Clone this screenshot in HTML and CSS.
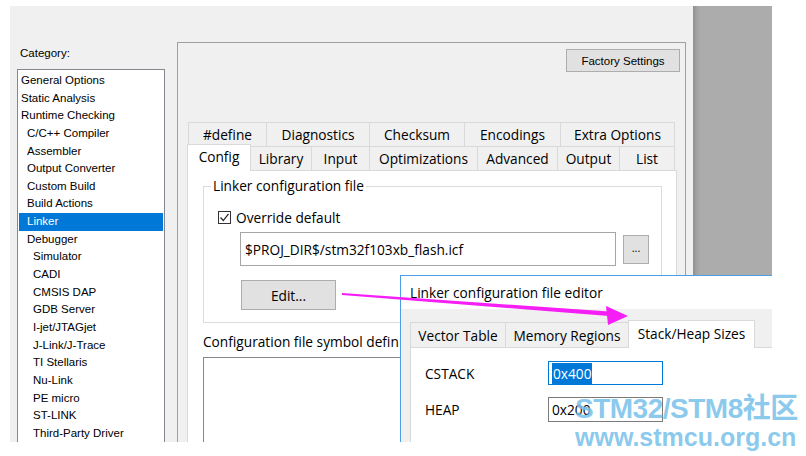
FILE: index.html
```html
<!DOCTYPE html>
<html>
<head>
<meta charset="utf-8">
<link rel="stylesheet" href="styles.css">
</head>
<body>
<div class="screen">
  <div class="window">
    <div class="cat-col">
      <div class="cat-label">Category:</div>
      <ul class="cat-list">
        <li class="l0">General Options</li>
        <li class="l0">Static Analysis</li>
        <li class="l0">Runtime Checking</li>
        <li class="l1">C/C++ Compiler</li>
        <li class="l1">Assembler</li>
        <li class="l1">Output Converter</li>
        <li class="l1">Custom Build</li>
        <li class="l1">Build Actions</li>
        <li class="l1 sel">Linker</li>
        <li class="l1">Debugger</li>
        <li class="l2">Simulator</li>
        <li class="l2">CADI</li>
        <li class="l2">CMSIS DAP</li>
        <li class="l2">GDB Server</li>
        <li class="l2">I-jet/JTAGjet</li>
        <li class="l2">J-Link/J-Trace</li>
        <li class="l2">TI Stellaris</li>
        <li class="l2">Nu-Link</li>
        <li class="l2">PE micro</li>
        <li class="l2">ST-LINK</li>
        <li class="l2">Third-Party Driver</li>
      </ul>
    </div>
    <div class="panel">
      <div class="panel-top"><div class="btn factory">Factory Settings</div></div>
      <div class="tabs">
        <div class="tab-row back">
          <div class="tab w78">#define</div>
          <div class="tab w103">Diagnostics</div>
          <div class="tab w95">Checksum</div>
          <div class="tab w96">Encodings</div>
          <div class="tab w114">Extra Options</div>
        </div>
        <div class="tab-row front">
          <div class="tab w63 active">Config</div>
          <div class="tab w61">Library</div>
          <div class="tab w58">Input</div>
          <div class="tab w108">Optimizations</div>
          <div class="tab w80">Advanced</div>
          <div class="tab w62">Output</div>
          <div class="tab w55">List</div>
        </div>
      </div>
      <div class="pane">
        <fieldset class="group">
          <legend>Linker configuration file</legend>
          <div class="check-row"><span class="box"><svg width="11" height="11" viewBox="0 0 11 11"><path d="M1.5 5.5 L4.3 8.5 L9.5 1.8" fill="none" stroke="#222" stroke-width="1.2"/></svg></span>Override default</div>
          <div class="path-row">
            <div class="field path">$PROJ_DIR$/stm32f103xb_flash.icf</div>
            <div class="btn dots">...</div>
          </div>
          <div class="btn edit">Edit...</div>
        </fieldset>
        <div class="sym-label">Configuration file symbol defin</div>
        <div class="sym-box"></div>
      </div>
    </div>
  </div>
  <div class="backdrop"></div>
</div>

<div class="dialog">
  <div class="dlg-title">Linker configuration file editor</div>
  <div class="dlg-body">
    <div class="dlg-tabs">
      <div class="dtab w95">Vector Table</div>
      <div class="dtab w123">Memory Regions</div>
      <div class="dtab w126 active">Stack/Heap Sizes</div>
    </div>
    <div class="dlg-pane">
      <div class="dlg-row"><span class="dlg-label">CSTACK</span><span class="field small focus"><span class="hl">0x400</span></span></div>
      <div class="dlg-row r2"><span class="dlg-label">HEAP</span><span class="field small dark">0x200</span></div>
    </div>
  </div>
</div>

<svg class="arrow" width="806" height="456" viewBox="0 0 806 456">
  <polygon points="342,293 609,311.5 609,316 342,295" fill="#f51ef5"/>
  <polygon points="606,306 628,316 608,325" fill="#f51ef5"/>
</svg>

<div class="watermark">
  <div class="wm1">STM32/STM8社区</div>
  <div class="wm2">www.stmcu.org.cn</div>
</div>
</body>
</html>
```
FILE: styles.css
```css
* { box-sizing: border-box; }
html, body { margin: 0; padding: 0; background: #fff; }
body {
  width: 806px; height: 456px; overflow: hidden; position: relative;
  font-family: "Liberation Sans", Arial, sans-serif; color: #000;
}
.screen { display: flex; padding: 6px 0 0 10px; height: 442px; }
.window { width: 683px; height: 436px; background: #f0f0f0; display: flex; overflow: hidden; }
.backdrop { width: 79px; background: linear-gradient(to right, #8e8e8e 0, #a4a4a4 4px, #acacac 8px); }

/* category column */
.cat-col { width: 167px; padding-left: 7px; display: flex; flex-direction: column; }
.cat-label { font-size: 11.5px; line-height: 16px; margin: 39px 0 0 3px; }
.cat-list {
  list-style: none; margin: 8px 0 0; padding: 2px 1px 0;
  background: #fff; border: 1px solid #828790; border-bottom: none;
  width: 148px; flex: 1;
}
.cat-list li { font-size: 11.5px; line-height: 17.65px; height: 17.65px; white-space: nowrap; }
.cat-list .l0 { padding-left: 2px; }
.cat-list .l1 { padding-left: 8px; }
.cat-list .l2 { padding-left: 14px; }
.cat-list .sel { background: #0078d7; color: #fff; }

/* right panel */
.panel {
  width: 509px; margin-top: 36px; border: 1px solid #a0a0a0; border-bottom: none;
  padding: 6px 5px 0 9px; display: flex; flex-direction: column;
}
.panel-top { display: flex; justify-content: flex-end; }
.btn {
  background: #e1e1e1; border: 1px solid #adadad; display: flex;
  align-items: center; justify-content: center;
}
.factory { width: 114px; height: 23px; font-size: 11.5px; }

.tabs { margin-top: 50px; font-family: "Open Sans", "Liberation Sans", sans-serif; font-size: 13.7px; }
.tab-row { display: flex; height: 24px; }
.tab-row.back { margin-left: 1px; }
.tab {
  height: 24px; border: 1px solid #d9d9d9; border-bottom: none; margin-right: -1px;
  display: flex; align-items: center; justify-content: center; background: #f0f0f0;
  white-space: nowrap;
}
.tab.active {
  background: #fff; height: 27px; margin-top: -2px; position: relative; z-index: 1;
  padding-bottom: 3px;
}
.w55 { width: 56px; } .w58 { width: 59px; } .w61 { width: 62px; } .w62 { width: 63px; }
.w63 { width: 64px; } .w78 { width: 79px; } .w80 { width: 81px; } .w95 { width: 96px; }
.w96 { width: 97px; } .w103 { width: 104px; } .w108 { width: 109px; } .w114 { width: 115px; }
.w123 { width: 124px; } .w126 { width: 127px; }

.pane {
  width: 490px; flex: 1; background: #fff; border: 1px solid #d9d9d9; border-bottom: none;
  padding: 7px 15px 0; font-family: "Open Sans", "Liberation Sans", sans-serif; font-size: 13.7px;
  display: flex; flex-direction: column;
}
.group { margin: 0; padding: 0 0 12px; border: 1px solid #dcdcdc; width: 459px; min-width: 0; }
.group legend { margin-left: 7px; padding: 0 2px; line-height: 16px; }
.check-row { display: flex; align-items: center; height: 16px; margin-top: 15px; padding-left: 14px; }
.box {
  width: 13px; height: 13px; border: 1px solid #333; background: #fff; margin-right: 5px;
  display: flex; align-items: center; justify-content: center;
}
.path-row { display: flex; align-items: center; margin-top: 7px; padding-left: 36px; }
.field { background: #fff; border: 1px solid #a6a6a6; display: flex; align-items: center; white-space: nowrap; }
.path { width: 376px; height: 34px; padding-left: 4px; }
.dots { width: 26px; height: 29px; margin-left: 7px; font-size: 11px; padding-bottom: 4px; }
.edit { width: 95px; height: 30px; margin: 14px 0 0 37px; }
.sym-label { margin-top: 11px; line-height: 16px; white-space: nowrap; }
.sym-box { margin-top: 7px; width: 459px; flex: 1; background: #fff; border: 1px solid #828790; border-bottom: none; }

/* overlay dialog */
.dialog {
  position: absolute; left: 400px; top: 275px; width: 372px; height: 167px;
  border-top: 1px solid #4a9fe6; border-left: 1px solid #4a9fe6; background: #f0f0f0;
  display: flex; flex-direction: column;
  font-family: "Open Sans", "Liberation Sans", sans-serif; font-size: 13.7px;
}
.dlg-title { background: #fff; height: 33px; line-height: 33px; padding-left: 9px; }
.dlg-body { flex: 1; padding: 13px 0 0 9px; display: flex; flex-direction: column; }
.dlg-tabs { display: flex; height: 25px; }
.dtab {
  height: 25px; border: 1px solid #d9d9d9; border-bottom: none; margin-right: -1px;
  display: flex; align-items: center; justify-content: center; white-space: nowrap;
}
.dtab.active { background: #fff; height: 28px; margin-top: -2px; padding-bottom: 3px; position: relative; z-index: 1; }
.dlg-pane { flex: 1; background: #fff; border-top: 1px solid #d9d9d9; border-left: 1px solid #d9d9d9; padding: 13px 0 0 14px; }
.dlg-row { display: flex; align-items: center; height: 24px; }
.dlg-row.r2 { margin-top: 12px; height: 25px; }
.dlg-label { width: 123px; }
.small { width: 115px; height: 100%; padding-left: 3px; }
.focus { border-color: #0078d7; }
.dark { border-color: #7a7a7a; }
.hl { background: #0078d7; color: #fff; padding: 1px 1px; }

.arrow { position: absolute; left: 0; top: 0; pointer-events: none; }

.watermark {
  position: absolute; left: 575px; top: 393px; color: rgba(118, 192, 234, 0.85);
  font-family: "Liberation Sans", "Noto Sans CJK SC", sans-serif; font-weight: bold;
  white-space: nowrap; pointer-events: none;
}
.wm1 { font-size: 28px; line-height: 32px; letter-spacing: -0.5px; }
.wm2 { font-size: 25px; line-height: 24px; }
```
